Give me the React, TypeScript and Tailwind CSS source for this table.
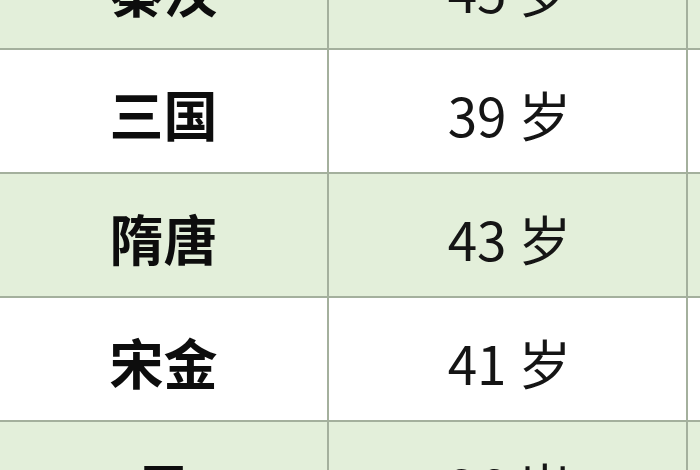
import React from "react";

const rows = [
  { name: "秦汉", age: "45", green: true },
  { name: "三国", age: "39", green: false },
  { name: "隋唐", age: "43", green: true },
  { name: "宋金", age: "41", green: false },
  { name: "元", age: "36", green: true },
];

export default function App() {
  return (
    <div
      className="w-[700px] h-[470px] overflow-hidden bg-white"
      style={{ fontFamily: '"Noto Sans CJK SC", "Noto Sans", sans-serif' }}
    >
      <div className="mt-[-74px] flex flex-col">
        {rows.map((r, i) => (
          <div
            key={i}
            className={`flex h-[124px] shrink-0 border-b-2 border-[#a4b09d] ${
              r.green ? "bg-[#e3efda]" : "bg-white"
            }`}
          >
            <div className="w-[329px] shrink-0 border-r-2 border-[#a4b09d] flex items-center justify-center pt-[6px]">
              <span className="text-[54px] font-bold text-[#0d0d0d] leading-none">{r.name}</span>
            </div>
            <div className="w-[359px] shrink-0 border-r-2 border-[#a4b09d] flex items-center justify-center pt-[6px] pl-[4px]">
              <span className="text-[53px] text-[#151515] leading-none">
                {r.age} 岁
              </span>
            </div>
            <div className="flex-1" />
          </div>
        ))}
      </div>
    </div>
  );
}
